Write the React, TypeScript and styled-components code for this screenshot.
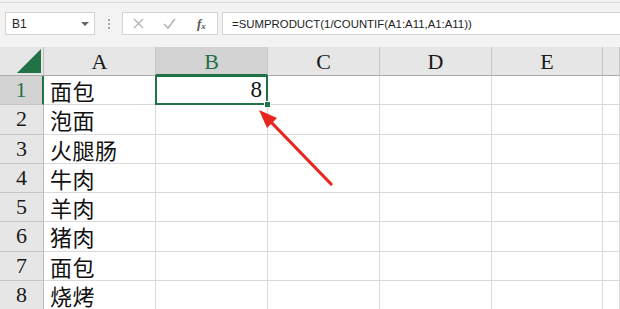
import styled, { createGlobalStyle } from "styled-components";

const GlobalStyle = createGlobalStyle`
  html, body {
    margin: 0;
    padding: 0;
    background: #ffffff;
  }
  body {
    width: 620px;
    height: 309px;
    overflow: hidden;
    font-family: "Liberation Sans", Arial, sans-serif;
  }
`;

const Frame = styled.div`
  position: relative;
  width: 620px;
  height: 309px;
  overflow: hidden;
  background: #f3f3f3;
`;

const Toolbar = styled.div`
  height: 45px;
  box-sizing: border-box;
  border-top: 1px solid #dcdcdc;
  margin-top: 2px;
  padding: 9px 0 0 5px;
  display: flex;
  align-items: flex-start;
  background: #f3f3f3;
`;

const NameBox = styled.div`
  width: 90px;
  height: 23px;
  box-sizing: border-box;
  border: 1px solid #d4d4d4;
  background: #fff;
  display: flex;
  align-items: center;
  justify-content: space-between;
  padding: 0 5px 0 6px;
  font-size: 12px;
  color: #222;
`;

const Caret = styled.span`
  width: 0;
  height: 0;
  border-left: 4px solid transparent;
  border-right: 4px solid transparent;
  border-top: 4px solid #666;
`;

const Divider = styled.div`
  width: 27px;
  height: 23px;
  display: flex;
  flex-direction: column;
  align-items: center;
  justify-content: center;
  gap: 2px;

  span {
    width: 2px;
    height: 2px;
    background: #a8a8a8;
  }
`;

const FuncBox = styled.div`
  width: 96px;
  height: 23px;
  box-sizing: border-box;
  border: 1px solid #d4d4d4;
  background: #fff;
  display: flex;
  align-items: center;
  padding-left: 10px;
  color: #b4b4b4;
`;

const IconSlot = styled.span`
  width: 30px;
  display: flex;
  align-items: center;
  justify-content: flex-start;
`;

const Fx = styled.span`
  font-family: "Liberation Serif", serif;
  font-style: italic;
  font-weight: bold;
  font-size: 13px;
  color: #555;
  margin-left: 4px;

  sub {
    font-size: 9px;
    vertical-align: -1px;
  }
`;

const FormulaBox = styled.div`
  flex: 1;
  margin-left: 4px;
  height: 23px;
  box-sizing: border-box;
  border: 1px solid #d4d4d4;
  border-right: none;
  background: #fff;
  display: flex;
  align-items: center;
  padding-left: 9px;
  font-size: 11.4px;
  color: #222;
  white-space: nowrap;
`;

const Sheet = styled.div`
  display: grid;
  grid-template-columns: 44px 112px 112px 112px 112px 111px 1fr;
  grid-template-rows: 29px repeat(8, 29.25px);
  background: #fff;
`;

const Corner = styled.div`
  background: #e6e6e6;
  border-right: 1px solid #bdbdbd;
  border-bottom: 1px solid #ababab;
  box-sizing: border-box;
  display: flex;
  align-items: flex-end;
  justify-content: flex-end;
  padding: 0 2px 2px 0;
`;

const Triangle = styled.div`
  width: 0;
  height: 0;
  border-left: 24px solid transparent;
  border-bottom: 24px solid #217346;
`;

const ColHeader = styled.div<{ $active?: boolean }>`
  background: ${({ $active }) => ($active ? "#d3d3d3" : "#e6e6e6")};
  border-right: 1px solid #c6c6c6;
  border-bottom: ${({ $active }) => ($active ? "2px solid #217346" : "1px solid #ababab")};
  box-sizing: border-box;
  display: flex;
  align-items: center;
  justify-content: center;
  font-family: "Liberation Serif", "Times New Roman", serif;
  font-size: 22px;
  color: ${({ $active }) => ($active ? "#217346" : "#1a1a1a")};
  padding-top: 2px;
`;

const RowHeader = styled.div<{ $active?: boolean }>`
  background: ${({ $active }) => ($active ? "#d3d3d3" : "#e6e6e6")};
  border-right: ${({ $active }) => ($active ? "2px solid #217346" : "1px solid #bdbdbd")};
  border-bottom: 1px solid #c6c6c6;
  box-sizing: border-box;
  display: flex;
  align-items: center;
  justify-content: center;
  font-family: "Liberation Serif", "Times New Roman", serif;
  font-size: 22px;
  color: ${({ $active }) => ($active ? "#217346" : "#1a1a1a")};
`;

const Cell = styled.div<{ $selected?: boolean; $right?: boolean }>`
  position: relative;
  border-right: 1px solid #d9d9d9;
  border-bottom: 1px solid #d9d9d9;
  box-sizing: border-box;
  display: flex;
  align-items: center;
  justify-content: ${({ $right }) => ($right ? "flex-end" : "flex-start")};
  padding: 0 5px 0 6px;
  font-family: "Liberation Serif", "Noto Sans CJK SC", serif;
  font-size: 23px;
  color: #111;
  white-space: nowrap;

  ${({ $selected }) =>
    $selected &&
    `
    &::after {
      content: "";
      position: absolute;
      left: -1px;
      top: -1px;
      right: -1px;
      bottom: -1px;
      border: 2px solid #217346;
      pointer-events: none;
    }
    &::before {
      content: "";
      position: absolute;
      right: -4px;
      bottom: -4px;
      width: 5px;
      height: 5px;
      background: #217346;
      border: 1px solid #fff;
      z-index: 2;
    }
  `}
`;

const CjkText = styled.span`
  font-family: "Noto Sans CJK SC", sans-serif;
  font-size: 22px;
  line-height: 1;
  letter-spacing: 0.5px;
`;

const Arrow = styled.svg`
  position: absolute;
  left: 0;
  top: 0;
  pointer-events: none;
`;

const columns = ["A", "B", "C", "D", "E", ""];
const foods = ["面包", "泡面", "火腿肠", "牛肉", "羊肉", "猪肉", "面包", "烧烤"];

export default function App() {
  return (
    <Frame>
      <GlobalStyle />
      <Toolbar>
        <NameBox>
          B1
          <Caret />
        </NameBox>
        <Divider>
          <span />
          <span />
          <span />
        </Divider>
        <FuncBox>
          <IconSlot>
            <svg width="11" height="11" viewBox="0 0 11 11">
              <path d="M1 1 L10 10 M10 1 L1 10" stroke="#b4b4b4" strokeWidth="1.4" />
            </svg>
          </IconSlot>
          <IconSlot>
            <svg width="13" height="11" viewBox="0 0 13 11">
              <path d="M1 6 L5 10 L12 1" stroke="#b4b4b4" strokeWidth="1.6" fill="none" />
            </svg>
          </IconSlot>
          <Fx>
            f<sub>x</sub>
          </Fx>
        </FuncBox>
        <FormulaBox>=SUMPRODUCT(1/COUNTIF(A1:A11,A1:A11))</FormulaBox>
      </Toolbar>
      <Sheet>
        <Corner>
          <Triangle />
        </Corner>
        {columns.map((c, i) => (
          <ColHeader key={i} $active={c === "B"}>
            {c}
          </ColHeader>
        ))}
        {foods.map((food, r) => (
          <>
            <RowHeader key={`h${r}`} $active={r === 0}>
              {r + 1}
            </RowHeader>
            <Cell key={`a${r}`}>
              <CjkText>{food}</CjkText>
            </Cell>
            <Cell key={`b${r}`} $selected={r === 0} $right>
              {r === 0 ? "8" : ""}
            </Cell>
            <Cell key={`c${r}`} />
            <Cell key={`d${r}`} />
            <Cell key={`e${r}`} />
            <Cell key={`f${r}`} />
          </>
        ))}
      </Sheet>
      <Arrow width="620" height="309" viewBox="0 0 620 309">
        <line x1="331" y1="184" x2="270" y2="121" stroke="#e8251f" strokeWidth="3.2" strokeLinecap="round" />
        <polygon points="259,110 277,118 267,128" fill="#e8251f" />
      </Arrow>
    </Frame>
  );
}
